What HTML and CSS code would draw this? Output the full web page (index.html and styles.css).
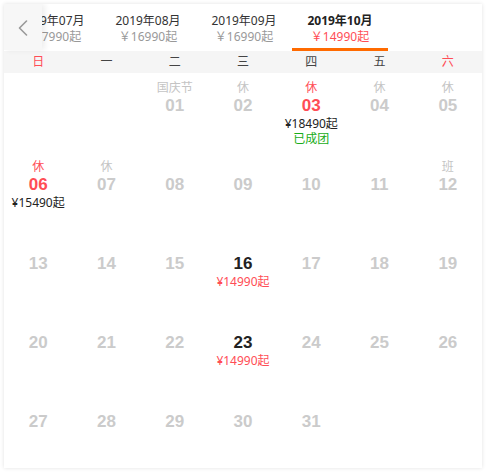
FILE: index.html
```html
<!DOCTYPE html>
<html lang="zh-CN">
<head>
<meta charset="utf-8">
<link rel="stylesheet" href="styles.css">
</head>
<body>
<div class="card">
  <div class="tabbar">
    <button class="prev" aria-label="上一月">
      <svg width="10" height="16" viewBox="0 0 10 16"><path d="M8.5 1 L1.5 8 L8.5 15" fill="none" stroke="#999" stroke-width="1.6" stroke-linecap="round" stroke-linejoin="round"/></svg>
    </button>
    <div class="tabs">
      <div class="tab"><div class="m">2019年07月</div><div class="p">￥17990起</div></div>
      <div class="tab"><div class="m">2019年08月</div><div class="p">￥16990起</div></div>
      <div class="tab"><div class="m">2019年09月</div><div class="p">￥16990起</div></div>
      <div class="tab active"><div class="m">2019年10月</div><div class="p">￥14990起</div></div>
    </div>
  </div>
  <div class="week">
    <span class="we">日</span><span>一</span><span>二</span><span>三</span><span>四</span><span>五</span><span class="we">六</span>
  </div>
  <div class="days">
    <div class="cell"></div>
    <div class="cell"></div>
    <div class="cell off"><div class="lb">国庆节</div><div class="n">01</div></div>
    <div class="cell off"><div class="lb">休</div><div class="n">02</div></div>
    <div class="cell hol"><div class="lb">休</div><div class="n">03</div><div class="pr">¥18490起</div><div class="tag">已成团</div></div>
    <div class="cell off"><div class="lb">休</div><div class="n">04</div></div>
    <div class="cell off"><div class="lb">休</div><div class="n">05</div></div>

    <div class="cell hol"><div class="lb">休</div><div class="n">06</div><div class="pr">¥15490起</div></div>
    <div class="cell off"><div class="lb">休</div><div class="n">07</div></div>
    <div class="cell off"><div class="lb"></div><div class="n">08</div></div>
    <div class="cell off"><div class="lb"></div><div class="n">09</div></div>
    <div class="cell off"><div class="lb"></div><div class="n">10</div></div>
    <div class="cell off"><div class="lb"></div><div class="n">11</div></div>
    <div class="cell off"><div class="lb">班</div><div class="n">12</div></div>

    <div class="cell off"><div class="lb"></div><div class="n">13</div></div>
    <div class="cell off"><div class="lb"></div><div class="n">14</div></div>
    <div class="cell off"><div class="lb"></div><div class="n">15</div></div>
    <div class="cell on"><div class="lb"></div><div class="n">16</div><div class="pr">¥14990起</div></div>
    <div class="cell off"><div class="lb"></div><div class="n">17</div></div>
    <div class="cell off"><div class="lb"></div><div class="n">18</div></div>
    <div class="cell off"><div class="lb"></div><div class="n">19</div></div>

    <div class="cell off"><div class="lb"></div><div class="n">20</div></div>
    <div class="cell off"><div class="lb"></div><div class="n">21</div></div>
    <div class="cell off"><div class="lb"></div><div class="n">22</div></div>
    <div class="cell on"><div class="lb"></div><div class="n">23</div><div class="pr">¥14990起</div></div>
    <div class="cell off"><div class="lb"></div><div class="n">24</div></div>
    <div class="cell off"><div class="lb"></div><div class="n">25</div></div>
    <div class="cell off"><div class="lb"></div><div class="n">26</div></div>

    <div class="cell off"><div class="lb"></div><div class="n">27</div></div>
    <div class="cell off"><div class="lb"></div><div class="n">28</div></div>
    <div class="cell off"><div class="lb"></div><div class="n">29</div></div>
    <div class="cell off"><div class="lb"></div><div class="n">30</div></div>
    <div class="cell off"><div class="lb"></div><div class="n">31</div></div>
    <div class="cell"></div>
    <div class="cell"></div>
  </div>
</div>
</body>
</html>
```
FILE: styles.css
```css
* { box-sizing: border-box; }
html, body { margin: 0; padding: 0; background: #fff; }
body {
  padding: 4px;
  font-family: "Noto Sans", "Noto Sans CJK SC", sans-serif;
  font-size: 12px;
  color: #333;
}
.card {
  width: 478px;
  height: 464px;
  background: #fff;
  box-shadow: 0 0 4px rgba(0,0,0,0.12);
  overflow: hidden;
  display: flex;
  flex-direction: column;
}
.tabbar {
  position: relative;
  height: 47px;
  flex: none;
}
.prev {
  position: absolute;
  left: 0;
  top: 0;
  width: 38px;
  height: 46px;
  border: 0;
  padding: 0;
  background: #f7f7f7;
  box-shadow: 3px 0 6px rgba(0,0,0,0.07);
  display: flex;
  align-items: center;
  justify-content: center;
  z-index: 2;
}
.prev svg { margin-top: 2px; }
.tabs {
  display: flex;
  height: 47px;
}
.tab {
  flex: none;
  width: 96px;
  height: 47px;
  padding-top: 9px;
  text-align: center;
  border-bottom: 3px solid transparent;
  white-space: nowrap;
}
.tab .m { line-height: 16px; color: #333; }
.tab .p { line-height: 16px; color: #999; }
.tab.active { border-bottom-color: #ff6a00; }
.tab.active .m { font-weight: bold; color: #222; }
.tab.active .p { color: #ff4d55; }
.week {
  flex: none;
  height: 22px;
  background: #f5f5f5;
  display: grid;
  grid-template-columns: repeat(7, 1fr);
  align-items: center;
  text-align: center;
  line-height: 22px;
  color: #444;
}
.week .we { color: #ff4d55; }
.days {
  flex: 1;
  display: grid;
  grid-template-columns: repeat(7, 1fr);
  grid-template-rows: repeat(5, 1fr);
}
.cell {
  padding-top: 7px;
  text-align: center;
  white-space: nowrap;
}
.lb { height: 15px; line-height: 15px; margin-bottom: 1px; color: #c4c4c4; }
.n {
  line-height: 20px;
  font-family: "Liberation Sans", "Noto Sans", sans-serif;
  font-size: 17px;
  font-weight: bold;
  color: #cbcbcb;
}
.pr { line-height: 16px; color: #222; }
.tag {
  line-height: 14px;
  font-family: "Liberation Sans", "Noto Sans CJK SC", sans-serif;
  color: #1aad19;
}
.hol .lb, .hol .n { color: #ff4d55; }
.on .n { color: #222; }
.on .pr { color: #ff4d55; }
```
